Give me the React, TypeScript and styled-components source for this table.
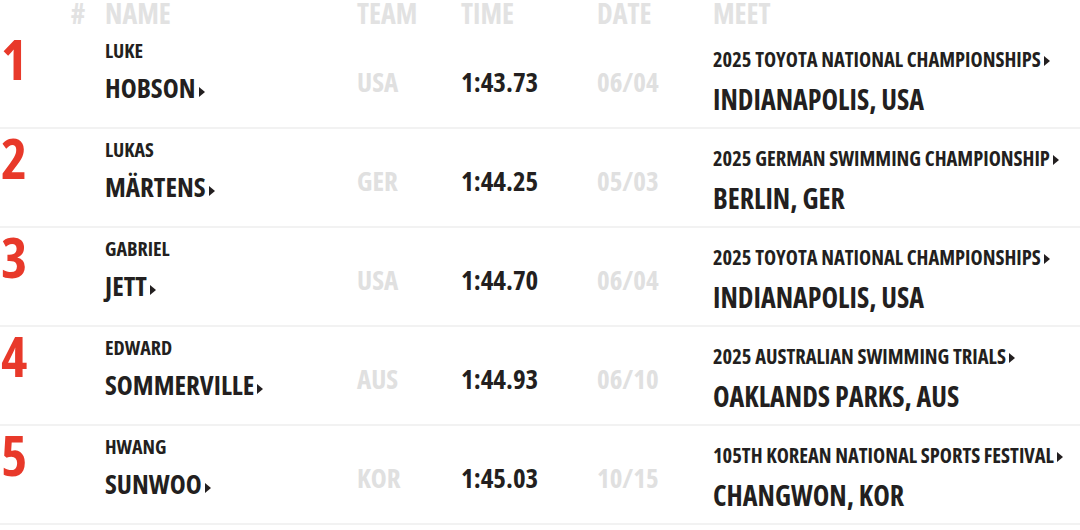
import styled, { createGlobalStyle } from "styled-components";

const GlobalStyle = createGlobalStyle`
  html, body {
    margin: 0;
    padding: 0;
    background: #ffffff;
  }
  body {
    font-family: "Open Sans", "DejaVu Sans Condensed", sans-serif;
    font-stretch: 75%;
    font-weight: 700;
    color: #231f20;
  }
`;

type Swim = {
  rank: number;
  first: string;
  last: string;
  team: string;
  time: string;
  date: string;
  meet: string;
  city: string;
};

const rows: Swim[] = [
  { rank: 1, first: "LUKE", last: "HOBSON", team: "USA", time: "1:43.73", date: "06/04", meet: "2025 TOYOTA NATIONAL CHAMPIONSHIPS", city: "INDIANAPOLIS, USA" },
  { rank: 2, first: "LUKAS", last: "MÄRTENS", team: "GER", time: "1:44.25", date: "05/03", meet: "2025 GERMAN SWIMMING CHAMPIONSHIP", city: "BERLIN, GER" },
  { rank: 3, first: "GABRIEL", last: "JETT", team: "USA", time: "1:44.70", date: "06/04", meet: "2025 TOYOTA NATIONAL CHAMPIONSHIPS", city: "INDIANAPOLIS, USA" },
  { rank: 4, first: "EDWARD", last: "SOMMERVILLE", team: "AUS", time: "1:44.93", date: "06/10", meet: "2025 AUSTRALIAN SWIMMING TRIALS", city: "OAKLANDS PARKS, AUS" },
  { rank: 5, first: "HWANG", last: "SUNWOO", team: "KOR", time: "1:45.03", date: "10/15", meet: "105TH KOREAN NATIONAL SPORTS FESTIVAL", city: "CHANGWON, KOR" },
];

// rank | name | team | time | date | meet
const cols = "105px 252px 104px 136px 116px 1fr";

const Table = styled.div`
  width: 1080px;
  display: flex;
  flex-direction: column;
`;

const HeaderRow = styled.div`
  display: grid;
  grid-template-columns: ${cols};
  height: 30px;
  align-items: start;
  font-size: 28px;
  line-height: 26px;
  color: #e2e2e2;
`;

const HeadCell = styled.div<{ $right?: boolean }>`
  text-align: ${(p) => (p.$right ? "right" : "left")};
  padding-right: ${(p) => (p.$right ? "20px" : "0")};
`;

const Row = styled.div`
  display: grid;
  grid-template-columns: ${cols};
  height: 97px;
  border-bottom: 2px solid #f2f2f2;
`;

const Rank = styled.div`
  color: #e8392a;
  font-size: 56px;
  line-height: 1;
  padding-left: 1px;
`;

const NameCell = styled.div`
  display: flex;
  flex-direction: column;
  padding-top: 9px;
  gap: 8px;
`;

const First = styled.div`
  font-size: 20px;
  line-height: 24px;
`;

const Last = styled.div`
  font-size: 27px;
  line-height: 34px;
  white-space: nowrap;
`;

const Caret = styled.span`
  display: inline-block;
  width: 0;
  height: 0;
  margin-left: 3px;
  margin-bottom: 1px;
  border-top: 5px solid transparent;
  border-bottom: 5px solid transparent;
  border-left: 6px solid #231f20;
`;

const Centered = styled.div<{ $muted?: boolean }>`
  display: flex;
  align-items: center;
  padding-top: 6px;
  font-size: 27px;
  color: ${(p) => (p.$muted ? "#e0e0e0" : "#231f20")};
`;

const MeetCell = styled.div`
  display: flex;
  flex-direction: column;
  padding-top: 16px;
  gap: 10px;
`;

const MeetName = styled.div`
  font-size: 20.5px;
  line-height: 26px;
  white-space: nowrap;
`;

const City = styled.div`
  font-size: 28px;
  line-height: 34px;
`;

export default function App() {
  return (
    <>
      <GlobalStyle />
      <Table>
        <HeaderRow>
          <HeadCell $right>#</HeadCell>
          <HeadCell>NAME</HeadCell>
          <HeadCell>TEAM</HeadCell>
          <HeadCell>TIME</HeadCell>
          <HeadCell>DATE</HeadCell>
          <HeadCell>MEET</HeadCell>
        </HeaderRow>
        {rows.map((r) => (
          <Row key={r.rank}>
            <Rank>{r.rank}</Rank>
            <NameCell>
              <First>{r.first}</First>
              <Last>
                {r.last}
                <Caret />
              </Last>
            </NameCell>
            <Centered $muted>{r.team}</Centered>
            <Centered>{r.time}</Centered>
            <Centered $muted>{r.date}</Centered>
            <MeetCell>
              <MeetName>
                {r.meet}
                <Caret />
              </MeetName>
              <City>{r.city}</City>
            </MeetCell>
          </Row>
        ))}
      </Table>
    </>
  );
}
